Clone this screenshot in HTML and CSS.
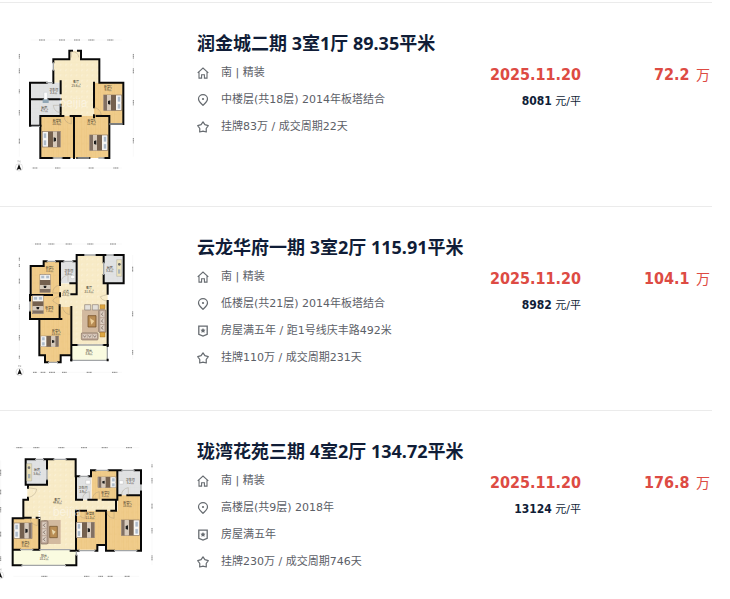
FILE: index.html
```html
<!DOCTYPE html>
<html lang="zh-CN">
<head>
<meta charset="utf-8">
<meta name="viewport" content="width=device-width, initial-scale=1">
<title>成交房源</title>
<link rel="stylesheet" href="styles.css">
</head>
<body>
<svg class="defs" aria-hidden="true">
  <defs>
    <pattern id="wood" width="14" height="44" patternUnits="userSpaceOnUse">
      <rect width="14" height="44" fill="#f0cc8b"/><path d="M0 0V44M7 0V44M0 12H7M7 33H14" stroke="#e9bf78" stroke-width="1"/>
    </pattern>
    <pattern id="tile" width="16" height="16" patternUnits="userSpaceOnUse">
      <rect width="16" height="16" fill="#f8ebc7"/><path d="M0 0H16M0 0V16" stroke="#f4e3b8"/><path d="M3 11l5-5" stroke="#fbf1d6" stroke-width="3"/>
    </pattern>
    <pattern id="grey" width="13" height="13" patternUnits="userSpaceOnUse">
      <rect width="13" height="13" fill="#e1e2e3"/><path d="M0 0H13M0 0V13" stroke="#d8dadb"/>
    </pattern>
    <g id="bed">
      <rect width="54" height="46" fill="#f7f3ec" stroke="#8a7767" stroke-width="2"/>
      <path d="M3 4h10v16H3zM3 25h10v17H3z" fill="#aebbc9" stroke="#fff" stroke-width="2"/>
      <path d="M17 0h15v46H17z" fill="#75614f"/><path d="M32 0h12v46H32z" fill="#d7cabb"/><path d="M44 0h9v46h-9z" fill="#817063"/>
      <path d="M34 17l7 2v9l-7 2z" fill="#1d1d1d"/>
    </g>
    <g id="sofa">
      <rect width="70" height="22" rx="4" fill="#b8a292" stroke="#806c5d" stroke-width="2"/>
      <path d="M5 5h18v12H5zM26 5h18v12H26zM47 5h18v12H47z" fill="#ddd0c4"/>
      <path d="M8 8l6 6 5-6M29 8l6 6 5-6M50 8l6 6 5-6" fill="none" stroke="#5e4c42" stroke-width="2"/>
    </g>
    <g id="compass"><circle r="11" fill="#fff" stroke="#aaa"/><path d="M0-10L7 8 0 5-7 8z" fill="#111"/><path d="M-3-15V-21L3-15V-21" fill="none" stroke="#777"/></g>
    <symbol id="home" viewBox="0 0 12 12"><path d="M.7 5.9L6 1l5.3 4.9M2 5.2v5.900h2.600V7.800h2.800v3.300H10V5.200" fill="none" stroke="currentColor" stroke-width="1.100"/></symbol>
    <symbol id="pin" viewBox="0 0 12 12"><path d="M6 11.300C3.900 9.100 1.500 7.500 1.500 4.900a4.500 4.300 0 0 1 9 0C10.500 7.500 8.100 9.100 6 11.300z" fill="none" stroke="currentColor" stroke-width="1.200"/><circle cx="6" cy="5" r="1.100" fill="currentColor"/></symbol>
    <symbol id="shield" viewBox="0 0 12 12"><path d="M1.800 1.200h8.400v8.100L6 11.100 1.800 9.300z" fill="none" stroke="currentColor" stroke-width="1.300"/><path d="M6 3l.8 1.500 1.700.3-1.200 1.200.3 1.800L6 7l-1.600.8.3-1.800-1.200-1.200 1.700-.3z" fill="currentColor"/></symbol>
    <symbol id="star" viewBox="0 0 12 12"><path d="M6 .8l1.900 2.900 3.400 1-2.100 2.800.1 3.500L6 10.200 2.700 11l.1-3.500L.7 4.700l3.400-1z" fill="none" stroke="currentColor" stroke-width="1.200" stroke-linejoin="round"/></symbol>
  </defs>
</svg>

<ul class="deals">
  <li class="deal">
    <svg class="plan" viewBox="0 0 480 450" role="img" aria-label="户型图">
      <g class="dims"><path d="M92 30H366M92 414H366M58 66V380M400 66V380"/></g>
      <g class="marks"><path d="M117 30h18M177 30h18M222 30h18M265 30h18M322 30h18M98 414h14M165 414h16M266 414h16M340 414h16M58 72v14M58 115v16M58 178v12M58 240v16M58 326v16M400 72v14M400 115v16M400 210v16M400 324v16"/></g>
      <path d="M160 88H210V62H242V88H297V158H282V258H182V158H160z" fill="url(#tile)"/>
      <path d="M90 158H182V258H122V287H90z" fill="url(#grey)"/>
      <path d="M282 158H369V281H328V384H121V258H282z" fill="url(#wood)"/>
      <path class="wall" d="M160 97V88H208V62H216M234 62H243V88H298V158H370V282H328V384H314M268 384H232M208 384H188M158 384H121V258H190M212 258H242M290 258H328V282M282 158V232M282 256V262M222 258V384M182 154V190M182 224V258M90 208H182M140 158H90V287H122M160 122V158"/>
      <path class="window" d="M160 97V122M158 384H188M232 384H268M295 384H314M328 282H368M94 289H120M138 158H158"/>
      <path class="door" d="M214 82V64q22 2 22 18M182 226h-22q2 20 22 22M282 232q18 4 22 22h-22M192 260q2 18 22 22v-22"/>
      <use href="#bed" x="127" y="305"/><use href="#bed" transform="translate(323 361) rotate(180)"/><use href="#bed" transform="translate(365 241) rotate(180)"/>
      <path d="M132 187h10v24h-10z" fill="#fff" stroke="#b7bec3"/><path d="M128 208h18v11h-18z" fill="#90a6b5"/>
      <text class="watermark" x="178" y="230">beijia</text>
      <g class="rooms"><text x="228" y="160">客厅</text><text x="228" y="170">25.6㎡</text><text x="161" y="182">卫生间</text><text x="161" y="192">3.3㎡</text><text x="133" y="237">厨房</text><text x="133" y="247">4.7㎡</text><text x="170" y="276">卧室B</text><text x="170" y="286">10.8㎡</text><text x="274" y="276">卧室A</text><text x="274" y="286">12.4㎡</text><text x="324" y="173">卧室C</text><text x="324" y="183">9.9㎡</text></g>
      <use href="#compass" x="57" y="412"/>
    </svg>
    <div class="info">
      <h2 class="title">润金城二期 3室1厅 89.35平米</h2>
      <ul class="facts">
        <li><svg class="icon" aria-hidden="true"><use href="#home"/></svg>南 | 精装</li>
        <li><svg class="icon" aria-hidden="true"><use href="#pin"/></svg>中楼层(共18层) 2014年板塔结合</li>
        <li><svg class="icon" aria-hidden="true"><use href="#star"/></svg>挂牌83万 / 成交周期22天</li>
      </ul>
    </div>
    <div class="closing"><div class="strong">2025.11.20</div><div class="unit"><b>8081</b> 元/平</div></div>
    <div class="total"><b class="strong">72.2</b> 万</div>
  </li>

  <li class="deal">
    <svg class="plan" viewBox="0 -3 480 450" role="img" aria-label="户型图">
      <g class="dims"><path d="M94 27H366M94 412H366M58 64V380M398 60V372"/></g>
      <g class="marks"><path d="M105 27h18M145 27h18M197 27h18M262 27h18M330 27h18M99 412h12M122 412h14M147 412h18M186 412h14M260 412h16M336 412h16M58 68v10M58 87v10M58 131v16M58 208v16M58 300v16M58 362v10M398 95v16M398 229v16M398 345v14"/></g>
      <path d="M233 60H311V146H323V330H214V215H179V146H233z" fill="url(#tile)"/>
      <path d="M131 79H180V215H214V360H181V382H135V360H118V252H90V179H94V93H131z" fill="url(#wood)"/>
      <path d="M180 79H230V145H180zM311 60H371V145H311z" fill="url(#grey)"/>
      <path d="M179 146H214V215H179z" fill="url(#tile)"/><path d="M214 330H323V376H214z" fill="#fafbe0"/>
      <path class="wall" d="M140 79H131V93H92V180H156M90 180V198M90 230V252H184M168 79H190M220 79H230V145H211M180 79V150M180 175V184M179 211V252M118 252V361H135V382H144M174 382H182V361H214V216M214 178H230V145M230 79V60H252M288 60H318M342 60H371V145H311V120M311 60V82M323 145V176M323 198V330H310M232 330H214V376"/>
      <path class="window" d="M140 79H168M190 79H220M252 60H288M318 60H342M90 198V230M144 382H174M214 376H322V330M232 330H310M311 82V120"/>
      <path class="wall" d="M214 376V374M323 376V374M323 330V333"/>
      <path class="door" d="M323 178l-22 7q4 12 22 13M180 150q-22 4-22 24h22M180 184q-18 2-22 14l22 14M187 215q4 20 22 24v-24M182 142q2-18 22-22v20"/>
      <use href="#bed" transform="translate(151 118) rotate(90) scale(1 .68)"/><use href="#bed" transform="translate(130 182) rotate(90) scale(1 .7)"/><use href="#bed" transform="translate(122 303) scale(1 .7)"/>
      <path d="M246 224h50v68h-50z" fill="#d2b99f"/><path d="M264 242h24v34h-24z" fill="#b98d55" stroke="#69461f" stroke-width="2"/><path d="M270 250l13 8-9 11z" fill="#eed09b"/>
      <use href="#sofa" transform="translate(318 224) rotate(90) scale(.98 1)"/><use href="#sofa" transform="translate(244 293) scale(.72 1)"/>
      <path d="M254 209h18v16h-18zM277 209h18v16h-18z" fill="#e3e0da" stroke="#8c8177" stroke-width="2"/><path d="M300 209h15v12h-15zM300 292h15v14h-15z" fill="#dda640" stroke="#8f5c18"/>
      <path d="M350 74h15v50h-15z" fill="#eee4be" stroke="#91958c"/><circle cx="358" cy="88" r="4" fill="#666"/><path d="M354 103h7v13h-7z" fill="#aab4ba"/><ellipse cx="218" cy="126" rx="7" ry="5" fill="#fff" stroke="#aaa"/>
      <g class="rooms"><text x="149" y="102">卧室C</text><text x="149" y="111">8.0㎡</text><text x="206" y="111">卫生间</text><text x="206" y="121">3.6㎡</text><text x="329" y="102">厨房</text><text x="329" y="112">5.3㎡</text><text x="267" y="163">客厅</text><text x="267" y="173">31.8㎡</text><text x="197" y="174">过道</text><text x="197" y="184">3.8㎡</text><text x="148" y="222">卧室B</text><text x="148" y="232">7.8㎡</text><text x="168" y="290">卧室A</text><text x="168" y="299">15.0㎡</text><text x="267" y="351">阳台</text><text x="267" y="361">8.6㎡</text></g>
      <use href="#compass" x="59" y="411"/>
    </svg>
    <div class="info">
      <h2 class="title">云龙华府一期 3室2厅 115.91平米</h2>
      <ul class="facts">
        <li><svg class="icon" aria-hidden="true"><use href="#home"/></svg>南 | 精装</li>
        <li><svg class="icon" aria-hidden="true"><use href="#pin"/></svg>低楼层(共21层) 2014年板塔结合</li>
        <li><svg class="icon" aria-hidden="true"><use href="#shield"/></svg>房屋满五年 / 距1号线庆丰路492米</li>
        <li><svg class="icon" aria-hidden="true"><use href="#star"/></svg>挂牌110万 / 成交周期231天</li>
      </ul>
    </div>
    <div class="closing"><div class="strong">2025.11.20</div><div class="unit"><b>8982</b> 元/平</div></div>
    <div class="total"><b class="strong">104.1</b> 万</div>
  </li>

  <li class="deal">
    <svg class="plan" viewBox="0 9 480 450" role="img" aria-label="户型图">
      <g class="dims"><path d="M40 38H418M40 424H418M2 76V390M456 76V390"/></g>
      <g class="marks"><path d="M49 38h18M100 38h18M175 38h18M243 38h18M305 38h18M378 38h18M124 424h18M252 424h16M295 424h14M323 424h16M374 424h16M2 104v18M2 164v14M2 216v16M2 290v16M2 364v14M456 88v10M456 129v16M456 206v16M456 279v16M456 361v16"/></g>
      <path d="M141 73H227V194H352V227H227V344H118V248H70V192H82V149H141z" fill="url(#tile)"/>
      <path d="M77 73H141V149H77zM229 124H273V194H229zM353 106H423V181H353z" fill="url(#grey)"/>
      <path d="M275 106H352V194H275zM353 181H422V347H318V330H292V344H227V227H353zM38 250H117V344H38z" fill="url(#wood)"/>
      <path d="M38 344H229V391H38z" fill="#fafbe0"/>
      <path class="wall" d="M105 73H77V149H141V136M141 102V73H160M132 73H141M200 73H227V124H238M266 124H273V106H286M326 106H364M404 106H423V147M423 168V347H412M342 347H318V330H292V347H286M236 347H228V227H258M228 124V194H246M265 194H290M308 194H352V106M353 181H362M382 181H422M348 194V227H334M312 227H290M318 227V330M84 149V158M84 188V194H70V248H92M110 248H118V344H100M60 344H38V250H70M38 250V391H64M198 391H229V362M229 347H212"/>
      <path class="window" d="M105 73H132M160 73H200M238 124H266M286 106H326M364 106H404M423 147V168M342 347H412M236 347H286M64 391H198M60 344H100M118 344H212M229 349V362M141 102V136"/>
      <path class="door" d="M84 158l26 4q-2 20-26 26M90 250q2 18 22 22v-22M248 192q0-18 20-22v22M278 192q0-18 20-22v22M365 180q0-18 20-22v22M234 228q2 20 22 22v-22M320 228q2 20 22 22v-22"/>
      <use href="#bed" x="42" y="264"/><use href="#bed" x="229" y="262"/><use href="#bed" transform="translate(418 301) rotate(180)"/><use href="#bed" transform="translate(348 158) rotate(180) scale(1 .7)"/>
      <path d="M132 255h50v72h-50z" fill="#d2b99f"/><path d="M149 274h23v34h-23z" fill="#b98d55" stroke="#684a25" stroke-width="2"/><path d="M155 283l12 7-8 10z" fill="#e9d8ae"/><use href="#sofa" transform="translate(144 257) rotate(90)"/>
      <path d="M80 86h15v52H80z" fill="#e9dfb7" stroke="#91958c"/><circle cx="87" cy="98" r="4" fill="#777"/><path d="M84 117h7v13h-7z" fill="#a3acb0"/><path d="M257 136h14v11h-14zM358 137h12v10h-12z" fill="#fff" stroke="#aaa"/><path d="M118 227v25" stroke="#fff" stroke-width="5" stroke-dasharray="4 3"/>
      <text class="watermark" x="158" y="242">beijia</text>
      <g class="rooms"><text x="111" y="109">厨房</text><text x="111" y="119">5.6㎡</text><text x="172" y="198">客厅</text><text x="172" y="208">44.9㎡</text><text x="249" y="163">卫生间</text><text x="249" y="173">3.9㎡</text><text x="316" y="177">卧室D</text><text x="316" y="187">8.2㎡</text><text x="391" y="137">卫生间</text><text x="391" y="147">5.2㎡</text><text x="382" y="206">卧室C</text><text x="382" y="216">15.0㎡</text><text x="270" y="241">卧室B</text><text x="270" y="251">11.3㎡</text><text x="76" y="327">卧室A</text><text x="76" y="337">8.6㎡</text><text x="132" y="365">阳台</text><text x="132" y="375">10.2㎡</text></g>
      <use href="#compass" x="0" y="421"/>
    </svg>
    <div class="info">
      <h2 class="title">珑湾花苑三期 4室2厅 134.72平米</h2>
      <ul class="facts">
        <li><svg class="icon" aria-hidden="true"><use href="#home"/></svg>南 | 精装</li>
        <li><svg class="icon" aria-hidden="true"><use href="#pin"/></svg>高楼层(共9层) 2018年</li>
        <li><svg class="icon" aria-hidden="true"><use href="#shield"/></svg>房屋满五年</li>
        <li><svg class="icon" aria-hidden="true"><use href="#star"/></svg>挂牌230万 / 成交周期746天</li>
      </ul>
    </div>
    <div class="closing"><div class="strong">2025.11.20</div><div class="unit"><b>13124</b> 元/平</div></div>
    <div class="total"><b class="strong">176.8</b> 万</div>
  </li>
</ul>
</body>
</html>
```
FILE: styles.css
```css
* { box-sizing: border-box; }

body {
  margin: 0;
  padding-top: 2px;
  background: #fff;
  color: #101d37;
  font: 11px/27px "DejaVu Sans", "Noto Sans CJK SC", sans-serif;
}

ul { list-style: none; margin: 0; padding: 0; }

.defs { position: absolute; width: 0; height: 0; }

.deals { margin-right: 18px; }

.deal {
  display: grid;
  grid-template-columns: 160px 1fr auto 129px;
  padding: 27px 2px 26px 0;
  border-top: 1px solid #ebebeb;
}
.deal:last-child { padding-bottom: 8px; }

.plan { display: block; width: 160px; height: 150px; }

.info { padding-left: 37px; }

.title {
  margin: 0 0 3px;
  font: bold 18px/26px "Noto Sans", "Noto Sans CJK SC", sans-serif;
}

.facts { color: #5c6067; }
.facts li { display: flex; align-items: center; gap: 12px; }

.icon { flex: none; width: 12px; height: 12px; color: #666b70; }

.closing, .total { text-align: right; padding-top: 31px; }

.strong {
  color: #dd4b43;
  font: bold 16px/27px "DejaVu Sans Condensed", "Noto Sans", sans-serif;
}

.unit b { font-family: "DejaVu Sans Condensed", "Noto Sans", sans-serif; font-size: 12px; }

.total { color: #dd4b43; font-size: 14px; }
.total .strong { margin-right: 2px; }

.wall { fill: none; stroke: #080808; stroke-width: 6; stroke-linecap: square; }
.window { fill: none; stroke: #a2a5a7; stroke-width: 4; }
.door { fill: none; stroke: #998c77; stroke-width: 1; }
.dims { stroke: #ececec; stroke-width: 1; }
.marks { stroke: #858585; stroke-width: 3; stroke-dasharray: 4 1; }
.rooms { fill: #41382b; font: 9px "Noto Sans CJK SC", sans-serif; text-anchor: middle; }
.watermark { fill: #fff; fill-opacity: .45; font: 34px Inter, sans-serif; }
```
